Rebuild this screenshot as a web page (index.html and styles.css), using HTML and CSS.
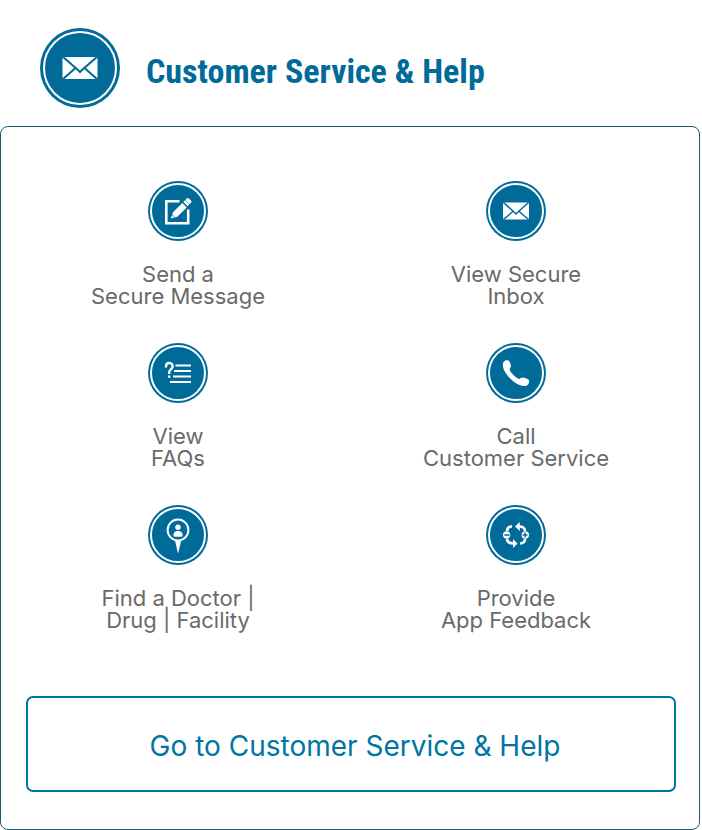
FILE: index.html
```html
<!DOCTYPE html>
<html lang="en">
<head>
<meta charset="utf-8">
<title>Customer Service &amp; Help</title>
<link rel="stylesheet" href="styles.css">
</head>
<body>
<header class="header">
  <svg class="header-icon" viewBox="0 0 80 80" aria-hidden="true">
    <circle class="disc" cx="40" cy="40" r="40"/>
    <circle class="ring" cx="40" cy="40" r="36" stroke-width="2"/>
    <rect class="solid" x="22.500" y="29" width="35" height="22" rx="1"/>
    <path class="cut" stroke-width="2" d="M23 29 37.500 41.500 40 44 42.500 41.500 57 29M23 51 35.500 40M57 51 44.500 40"/>
  </svg>
  <h1 class="title">Customer Service &amp; Help</h1>
</header>
<main class="panel">
  <nav class="actions" aria-label="Customer service">
    <a class="action" href="#message">
      <svg class="icon" viewBox="0 0 60 60" aria-hidden="true">
        <circle class="disc" cx="30" cy="30" r="30"/>
        <circle class="ring" cx="30" cy="30" r="27" stroke-width="2"/>
        <path class="line" stroke-width="2.600" d="M31.500 20.300H18.300V42.200H40.200V28.500"/>
        <path class="solid" d="M22.800 37.500 25 31.300 34.300 22 38.700 26.400 29.300 35.700ZM35.300 21 37 19.300 41.300 23.600 39.700 25.300ZM37.300 18.900 39 17.300Q40 16.600 41 17.400L43 19.400Q43.900 20.400 43.200 21.500L41.600 23.200Z"/>
        <path class="cut" stroke-width="0.900" d="M24.200 33.800 26.600 36.200"/>
      </svg>
      <span class="label">Send a<br>Secure Message</span>
    </a>
    <a class="action" href="#inbox">
      <svg class="icon" viewBox="0 0 60 60" aria-hidden="true">
        <circle class="disc" cx="30" cy="30" r="30"/>
        <circle class="ring" cx="30" cy="30" r="27" stroke-width="2"/>
        <rect class="solid" x="17" y="21.500" width="26" height="17" rx="1"/>
        <path class="cut" stroke-width="1.500" d="M17.500 21.500 28 31 30 33 32 31 42.500 21.500M17.500 38.500 26.800 30.500M42.500 38.500 33.200 30.500"/>
      </svg>
      <span class="label">View Secure<br>Inbox</span>
    </a>
    <a class="action" href="#faqs">
      <svg class="icon" viewBox="0 0 60 60" aria-hidden="true">
        <circle class="disc" cx="30" cy="30" r="30"/>
        <circle class="ring" cx="30" cy="30" r="27" stroke-width="2"/>
        <path class="line" stroke-width="2.400" d="M18 24.500V23.500C18 21 19.400 20 21.200 20S24.700 21.300 24.700 23.300C24.700 26.400 21.200 26.300 21.200 29.200V31"/>
        <path class="line" stroke-width="2.200" d="M20 33.700H22.400M27.500 22.500H43M26 28H43M25 33.500H43M22 39H43"/>
      </svg>
      <span class="label">View<br>FAQs</span>
    </a>
    <a class="action" href="#call">
      <svg class="icon" viewBox="0 0 60 60" aria-hidden="true">
        <circle class="disc" cx="30" cy="30" r="30"/>
        <circle class="ring" cx="30" cy="30" r="27" stroke-width="2"/>
        <path class="solid" d="M17.500 19C19 17 22 16.500 23.500 18.500L24.700 21.500C25.200 23.200 25 24.300 23.900 25.500C23.200 26.600 24.700 29.200 26.800 31.300C29 33.700 31.800 36 33.400 35.900C34.300 35.200 35.200 34.400 37 34.400C39 34.500 42.200 35.700 42.900 37.200C43.700 39.200 42.300 42 39.900 42.900C35.700 43.900 28.900 40.600 24.200 35.600C19.700 30.800 15.100 23.700 17.500 19Z"/>
      </svg>
      <span class="label">Call<br>Customer Service</span>
    </a>
    <a class="action" href="#find">
      <svg class="icon" viewBox="0 0 60 60" aria-hidden="true">
        <circle class="disc" cx="30" cy="30" r="30"/>
        <circle class="ring" cx="30" cy="30" r="27" stroke-width="2"/>
        <circle class="line" cx="30" cy="25" r="10.400" stroke-width="2"/>
        <path class="solid" d="M27 35.500Q30 36.500 33.200 35.500L30.300 48H29.900Z"/>
        <circle class="solid" cx="30" cy="22.300" r="2.700"/>
        <path class="solid" d="M25.500 30.500C25.500 27 27.500 26 30 26S34.500 27 34.500 30.500Q34.500 31.700 33 31.700H27Q25.500 31.700 25.500 30.500Z"/>
      </svg>
      <span class="label">Find a Doctor |<br>Drug | Facility</span>
    </a>
    <a class="action" href="#feedback">
      <svg class="icon" viewBox="0 0 60 60" aria-hidden="true">
        <circle class="disc" cx="30" cy="30" r="30"/>
        <circle class="ring" cx="30" cy="30" r="27" stroke-width="2"/>
        <path class="line" stroke-width="2.600" d="M26 21.500C22.800 21.400 21.300 23 21 26M21 34C21.300 37.100 22.800 38.500 27.500 38.500M33 21.500C37.300 21.500 38.800 23 39 26M39 34C38.800 37.100 37.300 38.500 34 38.500"/>
        <path class="solid" d="M29 21.500 33.800 17V26ZM31.500 38.500 27 34V43Z"/>
        <circle class="solid" cx="20.700" cy="30" r="3.700"/>
        <circle class="solid" cx="39.300" cy="30" r="3.700"/>
        <path class="cut" stroke-width="1.400" d="M18.300 30H23.600M36.700 30H41.500M39.100 27.600V32.400"/>
      </svg>
      <span class="label">Provide<br>App Feedback</span>
    </a>
  </nav>
  <a class="button" href="#help">Go to Customer Service &amp; Help</a>
</main>
</body>
</html>
```
FILE: styles.css
```css
* {
  box-sizing: border-box;
}

body {
  margin: 0 2px 0 0;
  background: #fff;
  font-family: Inter, "Liberation Sans", sans-serif;
}

.header {
  display: flex;
  align-items: center;
  gap: 26px;
  padding: 28px 40px 18px;
}

.header-icon {
  width: 80px;
  height: 80px;
}

.title {
  margin: 6px 0 0;
  color: #006b99;
  font: bold 34px/40px "Liberation Sans Narrow", "Roboto Condensed", Roboto, sans-serif;
}

.panel {
  padding: 54px 23px 37px 25px;
  border: 1px solid #1f5a70;
  border-radius: 8px;
}

.actions {
  display: grid;
  grid-template-columns: 1fr 1fr;
  row-gap: 36px;
  margin: 0 -9px 65px -17px;
}

.action {
  display: flex;
  flex-direction: column;
  align-items: center;
  gap: 22px;
  color: #6a6a6a;
  text-decoration: none;
}

.icon {
  width: 60px;
  height: 60px;
}

.label {
  font-size: 22px;
  line-height: 22px;
  text-align: center;
}

.button {
  display: block;
  padding: 32px 16px 28px 24px;
  border: 2px solid #0075a3;
  border-radius: 7px;
  color: #0075a3;
  font-size: 28px;
  line-height: 32px;
  text-align: center;
  text-decoration: none;
}

.disc {
  fill: #006b99;
}

.ring {
  fill: none;
  stroke: #fff;
}

.solid {
  fill: #fff;
}

.line {
  fill: none;
  stroke: #fff;
}

.cut {
  fill: none;
  stroke: #006b99;
}
```
